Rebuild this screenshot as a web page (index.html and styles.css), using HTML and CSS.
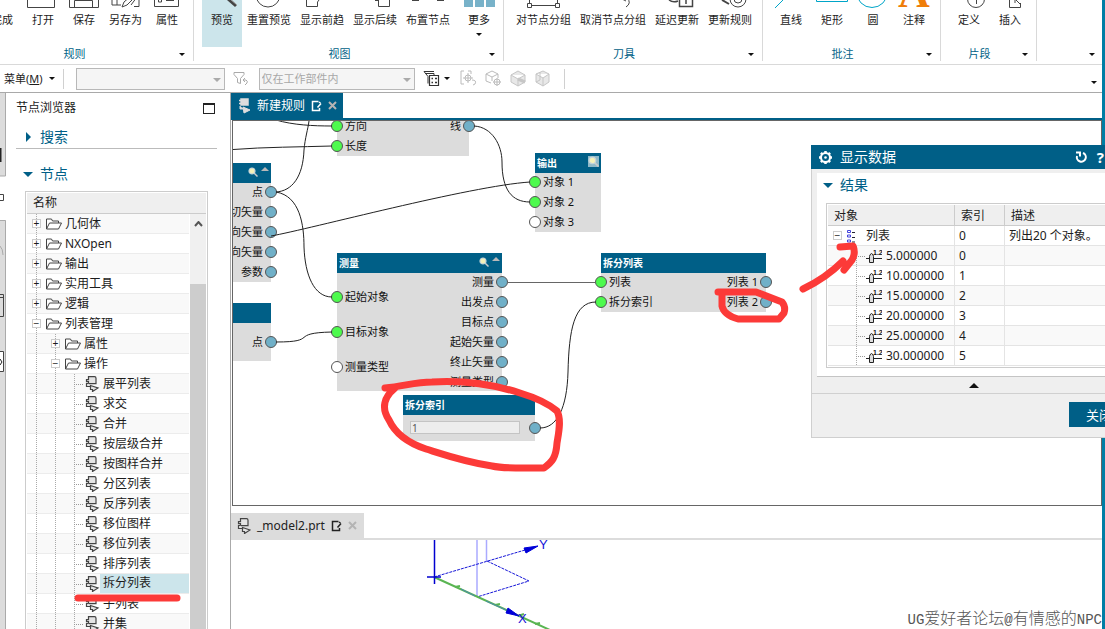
FILE: index.html
```html
<!DOCTYPE html>
<html lang="zh-CN">
<head>
<meta charset="utf-8">
<title>节点浏览器</title>
<link rel="stylesheet" href="styles.css">
</head>
<body>
<svg class="defs" aria-hidden="true">
  <symbol id="folder" viewBox="0 0 16 13"><path d="M.5 11.5V1.5h5l1 2h6v2M.5 11.5l3-6h12l-3 6z" fill="#fff" stroke="#444"/></symbol>
  <symbol id="node" viewBox="0 0 14 16"><path d="M3.500 .7h6q1.500 0 1.500 1.500v5.500h-7.500v-2h-2v-2h2z" fill="#e4e4e4" stroke="#444" stroke-width="1.200"/><path d="M3.500 7.500H1.500v3h4M5.500 9.500l7.500 2.500-5.500 3.500v-2h-2z" fill="#e4e4e4" stroke="#444" stroke-width="1.200"/></symbol>
  <symbol id="node-light" viewBox="0 0 14 16"><path d="M4 1h7v6H4zM2 2.500h2M2 5.500h2" fill="#ddd" stroke="#ddd" stroke-width="1.500"/><path d="M3 8v3h4M6 9l7 3-6 3z" fill="#ddd" stroke="#ddd"/></symbol>
  <symbol id="edit" viewBox="0 0 11 12"><path d="M7.500 1.500h-6v9h7V8M3 1.500h3M10 3.500L6.500 7.500M8 2l1.500 1" fill="none" stroke="currentColor" stroke-width="1.500"/></symbol>
  <symbol id="close" viewBox="0 0 9 9"><path d="M1 1l7 7M8 1L1 8" stroke="#b4b4b4" stroke-width="2"/></symbol>
  <symbol id="lens" viewBox="0 0 10 10"><path d="M6 6l3.500 3.500" stroke="#c9c9c9" stroke-width="1.500"/><circle cx="4" cy="4" r="3" fill="#f4f1b8" stroke="#c4d4da" stroke-width="1.200"/></symbol>
  <symbol id="scalar" viewBox="0 0 16 14"><path d="M0 9.500h4M8 9.500h8" stroke="#222" stroke-width="1.200"/><path d="M3.500 13.500V7.500q0-2 2-3 2 1 2 3v6z" fill="#ddd" stroke="#222"/><text x="7" y="6" class="scalar-text">1.2</text></symbol>
</svg>
<div class="app">
  <div class="main">
    <header class="ribbon">
      <section class="group group--first">
        <div class="tools">
          <button class="tool"><svg viewBox="-20 0 40 10"></svg>完成</button>
          <button class="tool"><svg viewBox="-20 0 40 10"><path d="M-15.500-2V7.500h27V-2"/></svg>打开</button>
          <button class="tool"><svg viewBox="-20 0 40 10"><path d="M-14.500-2V7.500h29V-2M-9.500 7V.5h18V7"/></svg>保存</button>
          <button class="tool"><svg viewBox="-20 0 40 10"><path d="M-14-2V5h9M-9 0v5M-4 7l2-5 7-6M-4 7l5-2 8-8M5 5l6-8M8 6.500h5V-2"/></svg>另存为</button>
          <button class="tool"><svg viewBox="-20 0 40 10"><path d="M-12.500-2V6.500h24V-2M-8.500-1v3h3v-3M-1 .5h8"/></svg>属性</button>
        </div>
        <footer>规则<i class="drop"></i></footer>
      </section>
      <section class="group">
        <div class="tools">
          <button class="tool tool--on"><svg viewBox="-20 0 40 10"><path d="M5-2l9 8" stroke-width="3"/><path d="M7-2l8 7" stroke="#aaa"/></svg>预览</button>
          <button class="tool"><svg viewBox="-20 0 40 10"><circle cx="-1" cy="-5" r="12"/></svg>重置预览</button>
          <button class="tool"><svg viewBox="-20 0 40 10"><path d="M-15.500-2V6.500h11V2l3-4"/></svg>显示前趋</button>
          <button class="tool"><svg viewBox="-20 0 40 10"><path d="M3.500-2V6.500h11V-2M0 .5h3"/></svg>显示后续</button>
          <button class="tool"><svg viewBox="-20 0 40 10"><path d="M-16 .5h7M9 .5h7"/></svg>布置节点</button>
          <button class="tool tool--more"><svg viewBox="-20 0 40 10"><path d="M-15-1h9v8h-9zM-4-1h9v8h-9zM7-1h9v8H7z" fill="#78b2c9" stroke="none"/></svg>更多<i class="drop"></i></button>
        </div>
        <footer>视图<i class="drop"></i></footer>
      </section>
      <section class="group">
        <div class="tools">
          <button class="tool"><svg viewBox="-20 0 40 10"><path d="M-12.500 5.500h24M-14.500-2v5M13.500-2v5"/><path d="M-16.500 3.500h4v4h-4zM11.500 3.500h4v4h-4z"/></svg>对节点分组</button>
          <button class="tool"><svg viewBox="-20 0 40 10"><path d="M14-2q5 5-1 9M9-1l4 2"/></svg>取消节点分组</button>
          <button class="tool"><svg viewBox="-20 0 40 10"><path d="M2.500-2V6.500h13V-2M9 0v4M-8 0q4 3 9 1" stroke-width="1.500"/></svg>延迟更新</button>
          <button class="tool"><svg viewBox="-20 0 40 10"><circle cx="8" cy="-1" r="8"/><circle cx="8" cy="-1" r="4"/><path d="M-8 0l7 4" stroke-width="2"/></svg>更新规则</button>
        </div>
        <footer>刀具<i class="drop"></i></footer>
      </section>
      <section class="group">
        <div class="tools">
          <button class="tool"><svg viewBox="-20 0 40 10" class="cyan"><path d="M-16 8L-6-2"/></svg>直线</button>
          <button class="tool"><svg viewBox="-20 0 40 10" class="cyan"><path d="M-15.500-2V1.500h31V-2"/></svg>矩形</button>
          <button class="tool"><svg viewBox="-20 0 40 10" class="cyan"><circle cx="-1" cy="-8" r="15.500"/></svg>圆</button>
          <button class="tool"><svg viewBox="-20 0 40 10"><text x="0" y="7" class="note-text">A</text></svg>注释</button>
        </div>
        <footer>批注<i class="drop"></i></footer>
      </section>
      <section class="group">
        <div class="tools">
          <button class="tool"><svg viewBox="-20 0 40 10"><circle cx="7" cy="-1" r="8.500"/><path d="M7.500-2v6"/></svg>定义</button>
          <button class="tool"><svg viewBox="-20 0 40 10"><path d="M3-.5H-.5V7.500h11V3M10 4L5-1M5 3V-1h4"/></svg>插入</button>
        </div>
        <footer>片段<i class="drop"></i></footer>
      </section>
      <section class="group group--rest"><footer><i class="drop"></i></footer></section>
    </header>

    <nav class="toolbar">
      <button class="menu"><span>菜单(<u>M</u>)</span><i class="drop"></i></button>
      <span class="sep"></span>
      <span class="combo"><select aria-label="类型过滤器" disabled><option></option></select></span>
      <svg class="tb-icon" width="16" height="16" fill="none" stroke="#aaa"><path d="M1 1.500h10v2l-3.500 4v5l-3-1v-4L1 3.500zM10 9h3q2 1 1 3l-2 2M10 9l2-2M10 9l2 2"/></svg>
      <span class="combo combo--scope"><select aria-label="选择范围" disabled><option>仅在工作部件内</option></select></span>
      <button class="icon-btn" aria-label="过滤"><svg width="17" height="17" fill="none" stroke="#333"><path d="M1 1.500h10M1 1.500l4 5v7M2 3.500h9v2"/><path d="M6.500 5.500h9v10h-9z" fill="#fff" stroke-width="1.200"/><path d="M8.500 8.500h1.500M12 8.500h2M8.500 12.500h1.500M12 12.500h2" stroke-width="1.500"/></svg><i class="drop"></i></button>
      <svg class="tb-icon" width="17" height="17" fill="none" stroke="#bbb"><path d="M4 1H1v13h3M8 1h3v3M8 3v10M3 8h10M12 10q5 0 3 4l-2 1"/><circle cx="8" cy="8" r="3"/></svg>
      <svg class="tb-icon" width="17" height="17" fill="none" stroke="#bbb"><path d="M1 4l6-3 6 3v4M1 4v7l5 2M1 4l6 3 6-3M7 7v4M12 8v8M8 12h8"/><circle cx="12" cy="12" r="3"/></svg>
      <svg class="tb-icon" width="17" height="17" fill="#e8e8e8" stroke="#c6c6c6"><path d="M1 5l7-4 7 4v7l-7 4-7-4zM1 5l7 4 7-4M8 9v7"/><path d="M8 9l7 3" stroke-width="3"/></svg>
      <svg class="tb-icon" width="17" height="17" fill="#e8e8e8" stroke="#c6c6c6"><path d="M1 4l7-3 6 3v8l-6 4-7-4zM1 4l7 4 6-4M8 8v8M5 2v8M5 10l-4 2"/></svg>
      <span class="sep"></span>
      <i class="drop drop--end"></i>
    </nav>

    <div class="work">
      <aside class="rail-bar">
        <svg width="6" height="536"><path d="M0 0h6v83H0zM0 127h6v409H0z" fill="#dcdcdc"/><path d="M5.500 0v83H0M0 127.500h5.500V536" fill="none" stroke="#aaa"/><path d="M0 55v14" stroke="#222" stroke-width="3"/><path d="M0 101.500h3.500v6H0M0 201.500h3.500v22H0M0 204.500h3M0 258.500h3.500v20H0" fill="none" stroke="#444"/><path d="M0 259h3v19H0z" fill="#fff"/><path d="M0 153q3 3 3 9" fill="none" stroke="#aaa"/><path d="M0 266l2 3-2 3" fill="none" stroke="#222"/></svg>
      </aside>

      <aside class="browser">
        <div class="browser-head"><span>节点浏览器</span><button class="maximize" aria-label="最大化"></button></div>
        <button class="fold fold--closed"><i></i>搜索</button>
        <button class="fold"><i></i>节点</button>
        <div class="tree-box">
          <div class="tree-title">名称</div>
          <div class="tree-scroll">
            <ul class="tree">
              <li><b class="rail"><i>+</i></b><svg><use href="#folder"/></svg><span>几何体</span></li>
              <li><b class="rail"><i>+</i></b><svg><use href="#folder"/></svg><span>NXOpen</span></li>
              <li><b class="rail"><i>+</i></b><svg><use href="#folder"/></svg><span>输出</span></li>
              <li><b class="rail"><i>+</i></b><svg><use href="#folder"/></svg><span>实用工具</span></li>
              <li><b class="rail"><i>+</i></b><svg><use href="#folder"/></svg><span>逻辑</span></li>
              <li><b class="rail"><i>−</i></b><svg><use href="#folder"/></svg><span>列表管理</span></li>
              <li><b class="rail"></b><b class="rail"><i>+</i></b><svg><use href="#folder"/></svg><span>属性</span></li>
              <li><b class="rail"></b><b class="rail"><i>−</i></b><svg><use href="#folder"/></svg><span>操作</span></li>
              <li><b class="rail"></b><b class="rail"></b><b class="rail leaf"></b><svg><use href="#node"/></svg><span>展平列表</span></li>
              <li><b class="rail"></b><b class="rail"></b><b class="rail leaf"></b><svg><use href="#node"/></svg><span>求交</span></li>
              <li><b class="rail"></b><b class="rail"></b><b class="rail leaf"></b><svg><use href="#node"/></svg><span>合并</span></li>
              <li><b class="rail"></b><b class="rail"></b><b class="rail leaf"></b><svg><use href="#node"/></svg><span>按层级合并</span></li>
              <li><b class="rail"></b><b class="rail"></b><b class="rail leaf"></b><svg><use href="#node"/></svg><span>按图样合并</span></li>
              <li><b class="rail"></b><b class="rail"></b><b class="rail leaf"></b><svg><use href="#node"/></svg><span>分区列表</span></li>
              <li><b class="rail"></b><b class="rail"></b><b class="rail leaf"></b><svg><use href="#node"/></svg><span>反序列表</span></li>
              <li><b class="rail"></b><b class="rail"></b><b class="rail leaf"></b><svg><use href="#node"/></svg><span>移位图样</span></li>
              <li><b class="rail"></b><b class="rail"></b><b class="rail leaf"></b><svg><use href="#node"/></svg><span>移位列表</span></li>
              <li><b class="rail"></b><b class="rail"></b><b class="rail leaf"></b><svg><use href="#node"/></svg><span>排序列表</span></li>
              <li class="selected"><b class="rail"></b><b class="rail"></b><b class="rail leaf"></b><svg><use href="#node"/></svg><span>拆分列表</span></li>
              <li><b class="rail"></b><b class="rail"></b><b class="rail leaf"></b><svg><use href="#node"/></svg><span>子列表</span></li>
              <li><b class="rail"></b><b class="rail"></b><b class="rail leaf"></b><svg><use href="#node"/></svg><span>并集</span></li>
            </ul>
            <div class="scrollbar"><svg width="9" height="6"><path d="M1 5l3.500-4L8 5" fill="none" stroke="#555" stroke-width="2"/></svg><span></span></div>
          </div>
        </div>
      </aside>

      <main class="editor">
        <div class="tabs tabs--active">
          <div class="tab"><svg width="14" height="16"><use href="#node-light"/></svg><span>新建规则</span><svg width="11" height="12"><use href="#edit"/></svg><button aria-label="关闭新建规则"><svg width="9" height="9"><use href="#close"/></svg></button></div>
        </div>
        <div class="canvas">
          <section class="graph-node n-line">
            <div class="ports"><ul><li class="on">方向</li><li class="on">长度</li></ul><ul class="out"><li>线</li></ul></div>
          </section>
          <section class="graph-node n-vector">
            <h3><span></span><svg><use href="#lens"/></svg><i class="up"></i></h3>
            <div class="ports"><ul class="out"><li>点</li><li>切矢量</li><li>向矢量</li><li>向矢量</li><li>参数</li></ul></div>
          </section>
          <section class="graph-node n-point">
            <h3></h3>
            <div class="ports"><ul class="out"><li>点</li></ul></div>
          </section>
          <section class="graph-node n-measure">
            <h3><span>测量</span><svg><use href="#lens"/></svg><i class="up"></i></h3>
            <div class="ports"><ul class="loose"><li class="on">起始对象</li><li class="on">目标对象</li><li>测量类型</li></ul><ul class="out"><li>测量</li><li>出发点</li><li>目标点</li><li>起始矢量</li><li>终止矢量</li><li>测量类型</li></ul></div>
          </section>
          <section class="graph-node n-output">
            <h3><span>输出</span><svg class="boxed"><use href="#lens"/></svg></h3>
            <div class="ports"><ul><li class="on">对象 1</li><li class="on">对象 2</li><li>对象 3</li></ul></div>
          </section>
          <section class="graph-node n-split">
            <h3><span>拆分列表</span></h3>
            <div class="ports"><ul><li class="on">列表</li><li class="on">拆分索引</li></ul><ul class="out"><li>列表 1</li><li>列表 2</li></ul></div>
          </section>
          <section class="graph-node n-index">
            <h3><span>拆分索引</span></h3>
            <div class="ports"><input aria-label="拆分索引" value="1"><ul class="out"><li></li></ul></div>
          </section>
          <svg class="wires" width="872" height="386" viewBox="233 121 872 386">
            <path d="M276 120C293 125 313 126 332 126M233 149.500C265 147 300 147 332 146M276 192C292 191 303 177 304 150C305 138 308 129 309 121M276 192C300 196 304 225 304 247C305 275 314 297 332 297M271 236C310 229 470 186 530 182M474 126C492 127 502 145 502 162C502 190 512 202 530 202M276 342C320 342 288 333 332 332M540 428C557 428 567 408 568 372C569 330 574 302 596 302"/>
            <path d="M507 282.500H596" stroke="#666"/>
          </svg>
        </div>
        <div class="tabs tabs--idle">
          <div class="tab"><svg width="14" height="16"><use href="#node"/></svg><span>_model2.prt</span><svg width="11" height="12"><use href="#edit"/></svg><button aria-label="关闭 _model2.prt"><svg width="9" height="9"><use href="#close"/></svg></button></div>
        </div>
        <div class="viewport">
          <svg width="330" height="89" viewBox="231 540 330 89">
            <g fill="none" stroke="#aaf" stroke-width="1.500"><path d="M477 540v57M486.500 540v21"/></g>
            <g fill="none" stroke="#1515d8" stroke-dasharray="3 1"><path d="M434 577L525 550M487 561L529 581L477 597"/></g>
            <path d="M434 577L550 630" stroke="#5ab552" stroke-width="2"/>
            <path d="M455 587l5-1M495 605l5-1M518 616l6-2M535 624l5-1" stroke="#5ab552" stroke-width="2"/>
            <path d="M461 589l14 7M486 601l20 9" stroke="#4b87b5"/>
            <path d="M434.500 540v44M427 577h14" stroke="#0000d0" stroke-width="1.500"/>
            <path d="M524 548l14-2-12 7zM508 608l11 8-13-3z" fill="#0000d8" stroke="#0000d8"/>
            <text x="539" y="549">Y</text><text x="518" y="623">X</text>
          </svg>
          <p class="credit"><span>UG</span>爱好者论坛<span>@</span>有情感的<span>NPC</span></p>
        </div>
      </main>
    </div>
  </div>
  <div class="edge"></div>

  <section class="dialog">
    <header><svg width="15" height="15"><path d="M7.500 1v13M1 7.500h13M2.900 2.900l9.200 9.200M12.100 2.900L2.900 12.100" stroke="#fff" stroke-width="2.500"/><circle cx="7.500" cy="7.500" r="4.500" fill="#005f87" stroke="#fff" stroke-width="2"/><circle cx="7.500" cy="7.500" r="1.300" fill="#fff"/></svg><h2>显示数据</h2><button aria-label="重置"><svg width="13" height="13" fill="none" stroke="#fff" stroke-width="2"><path d="M8 2a4.500 4.500 0 1 1-6 3M1 1.500h4v4"/></svg></button><button>?</button></header>
    <div class="result">
      <button class="fold"><i></i>结果</button>
      <table>
        <thead><tr><th class="c-object">对象</th><th class="c-index">索引</th><th>描述</th></tr></thead>
        <tbody>
          <tr><td><div class="cell"><b class="rail"><i>−</i></b><svg width="9" height="14" fill="none" stroke="#44d"><path d="M.5 1.500h3v2h-3zM.5 6h3v2h-3zM.5 11h3v2h-3z"/><path d="M5 3.500h3M5 8.500h3M5 13h3" stroke="#223"/></svg><span>列表</span></div></td><td>0</td><td>列出20 个对象。</td></tr>
          <tr><td><div class="cell child"><b class="rail leaf"></b><svg width="16" height="14"><use href="#scalar"/></svg><span>5.000000</span></div></td><td>0</td><td></td></tr>
          <tr><td><div class="cell child"><b class="rail leaf"></b><svg width="16" height="14"><use href="#scalar"/></svg><span>10.000000</span></div></td><td>1</td><td></td></tr>
          <tr><td><div class="cell child"><b class="rail leaf"></b><svg width="16" height="14"><use href="#scalar"/></svg><span>15.000000</span></div></td><td>2</td><td></td></tr>
          <tr><td><div class="cell child"><b class="rail leaf"></b><svg width="16" height="14"><use href="#scalar"/></svg><span>20.000000</span></div></td><td>3</td><td></td></tr>
          <tr><td><div class="cell child"><b class="rail leaf"></b><svg width="16" height="14"><use href="#scalar"/></svg><span>25.000000</span></div></td><td>4</td><td></td></tr>
          <tr><td><div class="cell child"><b class="rail leaf"></b><svg width="16" height="14"><use href="#scalar"/></svg><span>30.000000</span></div></td><td>5</td><td></td></tr>
        </tbody>
      </table>
    </div>
    <button class="collapse" aria-label="收起"><i></i></button>
    <footer><button>关闭</button></footer>
  </section>

  <svg class="marks" width="1105" height="629" fill="none" stroke="#fc3a38" stroke-linecap="round" stroke-linejoin="round">
    <path d="M385 388C405 386 415 382 432 382C465 380 495 385 520 393C540 399 550 405 557 411C562 420 558 436 557 443C556 458 552 462 544 468C520 468 505 469 492 466C465 462 445 455 426 449C408 443 395 433 389 420C381 408 384 397 395 388" stroke-width="7"/>
    <path d="M718 292H756L782 302Q786 307 784 313L779 319H738Q724 315 722 306V293" stroke-width="7"/>
    <path d="M803 289Q826 278 843 261M840 247L853 246Q856 253 852 260L844 270" stroke-width="7"/>
    <path d="M78 598H177" stroke-width="7"/>
  </svg>
</div>
</body>
</html>
```
FILE: styles.css
```css
* { box-sizing: border-box; }
body { margin: 0; background: #fff; color: #1c1c1c; font: 12px/20px "Noto Sans", "Noto Sans CJK SC", sans-serif; }
button { border: 0; padding: 0; background: none; color: inherit; font: inherit; }
ul, p, h2, h3 { margin: 0; padding: 0; list-style: none; font-weight: 400; }
svg { display: block; flex: none; }
.defs { position: absolute; width: 0; height: 0; }
.app { position: relative; display: flex; height: 100vh; overflow: hidden; }
.main { flex: 1; min-width: 0; display: flex; flex-direction: column; }
.edge { flex: 0 0 3px; background: #007ea5; }
.drop { display: block; flex: none; border: 3px solid transparent; border-top-color: #111; border-bottom: 0; }

/* ribbon */
.ribbon { display: flex; flex: none; height: 65px; padding-bottom: 3px; border-bottom: 1px solid #d9d9d9; font-size: 11px; }
.group { flex: none; display: flex; flex-direction: column; justify-content: space-between; padding: 0 6px 0 8px; border-right: 1px solid #d9d9d9; }
.group--first { margin-left: -26px; }
.group--rest { flex: 1; border: 0; justify-content: flex-end; padding-right: 5px; }
.tools { display: flex; gap: 1px; }
.tool { display: flex; flex-direction: column; align-items: center; min-width: 40px; height: 47px; padding: 0 4px; line-height: 18px; white-space: nowrap; }
.tool svg { width: 40px; height: 10px; margin: 0 -4px 1px; fill: none; stroke: #444; }
.tool svg.cyan { stroke: #00a5c8; }
.tool--on { background: #cce5eb; }
.tool--more { margin: 0 -2px 0 4px; }
.tool--more .drop { margin-top: 4px; }
.note-text { font: bold 44px "Liberation Serif", serif; fill: #ef7d0a; stroke: none; text-anchor: middle; }
.group footer { position: relative; display: flex; align-items: center; justify-content: center; height: 14px; padding-right: 20px; line-height: 14px; color: #005f87; }
.group footer .drop { position: absolute; right: 2px; }

/* selection toolbar */
.toolbar { display: flex; flex: none; align-items: center; height: 28px; padding: 0 5px 0 4px; border-bottom: 1px solid #a9a9a9; font-size: 11px; }
.menu { display: flex; align-items: center; gap: 6px; white-space: nowrap; }
.sep { width: 1px; height: 20px; margin: 0 12px 0 8px; background: #d0d0d0; }
.combo { position: relative; flex: 0 0 149px; height: 22px; }
.combo--scope { flex-basis: 156px; }
.combo::after { content: ""; position: absolute; right: 4px; top: 10px; border: 4px solid transparent; border-top-color: #aaa; border-bottom: 0; }
.combo select { display: block; width: 100%; height: 100%; padding: 0 2px; border: 1px solid #b8b8b8; border-radius: 0; background: #f5f5f5; color: #a8a8a8; font: inherit; appearance: none; opacity: 1; }
.tb-icon { margin: 0 4px; }
.combo + .tb-icon { margin: 0 10px 0 8px; }
.icon-btn { display: flex; align-items: center; gap: 4px; margin: 0 6px 0 8px; }
.drop--end { margin: 8px 0 0 auto; }

/* workspace */
.work { display: flex; flex: 1; min-height: 0; }
.rail-bar { flex: 0 0 6px; overflow: hidden; }
.browser { flex: 0 0 225px; display: flex; flex-direction: column; padding: 5px 13px 0 10px; border-right: 1px solid #aaa; overflow: hidden; }
.browser-head { display: flex; justify-content: space-between; align-items: center; height: 20px; flex: none; padding-right: 2px; }
.maximize { width: 12px; height: 11px; border: 1px solid #222; border-top-width: 2px; }
.fold { display: flex; align-items: center; height: 24px; flex: none; color: #005f87; font-size: 14px; line-height: 24px; }
.fold i { margin: 0 7px 0 7px; border: 5px solid transparent; border-top-color: #005f87; border-bottom: 0; }
.fold--closed { margin-top: 8px; height: 23px; border-bottom: 1px solid #bbb; }
.fold--closed i { margin: 0 9px 0 10px; border: 5px solid transparent; border-left-color: #005f87; border-right: 0; }
.browser .fold + .fold { margin-top: 13px; }
.tree-box { flex: 1; min-height: 0; display: flex; flex-direction: column; margin: 5px 9px 0; padding: 1px 1px 0; border: 1px solid #ccc; border-bottom: 0; }
.tree-title { flex: none; height: 21px; padding-left: 6px; background: #efefef; border-bottom: 1px solid #ccc; }
.tree-scroll { flex: 1; min-height: 0; display: flex; gap: 1px; }
.tree { flex: 1; overflow: hidden; }
.tree li { display: flex; align-items: center; height: 20px; border-bottom: 1px solid #ececec; line-height: 18px; }
.tree li:nth-child(odd) { background: #f9f9f9; }
.tree li svg { width: 16px; height: 16px; }
.tree li span { flex: 1; padding-left: 3px; white-space: nowrap; }
.tree .selected span { background: #cce5eb; height: 19px; }
.rail { position: relative; flex: 0 0 19px; height: 20px; background: repeating-linear-gradient(#aaa 0 1px, transparent 1px 2px) 9px 0 / 1px 100% no-repeat; }
.rail i { position: absolute; left: 5px; top: 5px; width: 9px; height: 9px; border: 1px solid #ccc; background: #fff; font: 10px/7px "Liberation Sans", sans-serif; text-align: center; }
.rail.leaf::after { content: ""; position: absolute; left: 9px; top: 10px; width: 9px; border-top: 1px dotted #999; }
.scrollbar { flex: 0 0 16px; display: flex; flex-direction: column; align-items: center; padding-top: 7px; background: #f0f0f0; }
.scrollbar span { flex: 1; width: 100%; margin-top: 57px; background: #cdcdcd; }

.editor { flex: 1; min-width: 0; display: flex; flex-direction: column; }
.tabs { display: flex; flex: none; height: 27px; border-bottom: 2px solid #005f87; }
.tab { display: flex; align-items: center; gap: 6px; height: 25px; padding: 0 6px; background: #005f87; color: #fff; white-space: nowrap; }
.tabs--idle { border-color: #dcdcdc; margin-top: 7px; }
.tabs--idle .tab { padding-right: 7px; background: #dcdcdc; color: #222; }
.canvas { position: relative; flex: 0 0 386px; margin-left: 1px; border: 1px solid #666; overflow: hidden; font-size: 11px; }
.wires { position: absolute; left: 0; top: 0; fill: none; stroke: #222; stroke-width: 1; pointer-events: none; }
.graph-node { position: absolute; background: #dcdcdc; color: #111; }
.graph-node h3 { display: flex; height: 20px; padding: 0 2px 0 2px; background: #005f87; color: #fff; font-size: 10px; font-weight: 700; }
.graph-node h3 span { flex: 1; }
.graph-node h3 svg { width: 10px; height: 10px; margin: 4px 3px 0 0; }
.graph-node h3 svg.boxed { width: 11px; height: 11px; margin: 3px 0 0; background: #8fb9c8; }
.up { height: 4px; margin-top: 4px; border: 4px solid transparent; border-bottom-color: #b9b9b9; border-top: 0; }
.ports { display: flex; justify-content: space-between; margin-top: -1px; }
.ports li { display: flex; align-items: center; gap: 2px; height: 20px; white-space: nowrap; line-height: 18px; }
.ports li::before { content: ""; width: 10px; height: 10px; margin-left: -6px; border: 1px solid #555; border-radius: 50%; background: #fff; }
.ports li.on::before { background: #4dfa4d; }
.ports .out { margin-left: auto; }
.ports .out li { flex-direction: row-reverse; }
.ports .out li::before { margin: 0 -6px 0 0; background: #70b0c8; }
.ports .loose { padding-top: 7px; }
.ports .loose li { height: 35px; }
.ports input { width: 110px; height: 13px; margin: 7px 0 7px 7px; padding: 0 1px; border: 1px solid #c4c4c4; background: #ededed; color: #555; font: 10px/11px "Noto Sans", sans-serif; }
.n-index .out { padding-top: 4px; }
.n-line { left: 104px; top: -4px; width: 132px; }
.n-vector { left: -28px; top: 42px; width: 66px; }
.n-point { left: -28px; top: 182px; width: 66px; padding-bottom: 9px; }
.n-point .ports { padding-top: 10px; }
.n-measure { left: 104px; top: 132px; width: 165px; height: 138px; }
.n-output { left: 302px; top: 32px; width: 66px; }
.n-split { left: 368px; top: 132px; width: 165px; }
.n-index { left: 170px; top: 274px; width: 132px; }

.viewport { position: relative; flex: 1; min-height: 0; overflow: hidden; }
.viewport svg text { font: 13px "Liberation Sans", sans-serif; fill: #1515d8; }
.credit { position: absolute; right: 0; bottom: 0; font: 300 16px/24px "Noto Sans CJK SC", sans-serif; color: #555; white-space: nowrap; }
.credit span { font: 14px "Liberation Mono", monospace; }

/* data dialog */
.dialog { position: absolute; left: 811px; top: 145px; width: 330px; border: 1px solid #cfcfcf; border-top: 0; background: #efefef; }
.dialog header { display: flex; align-items: center; height: 24px; margin-left: -1px; padding: 0 36px 0 7px; background: #005f87; color: #fff; font-size: 14px; }
.dialog h2 { flex: 1; padding-left: 7px; font-size: 14px; }
.dialog header button { margin-left: 9px; font-weight: 700; font-size: 15px; }
.result { margin: 4px 0 0 5px; padding-bottom: 8px; background: #fff; border-bottom: 1px solid #c4c4c4; }
.result .fold i { margin-left: 6px; }
.dialog table { width: 100%; margin: 6px 0 0 9px; border: 1px solid #ccc; border-collapse: separate; border-spacing: 0; padding: 1px; table-layout: fixed; }
.dialog th, .dialog td { height: 20px; padding: 0 4px; border-right: 1px solid #e4e4e4; border-bottom: 1px solid #e4e4e4; text-align: left; font-weight: 400; line-height: 19px; white-space: nowrap; }
.dialog th { height: 21px; padding: 0 6px; background: #efefef; border-color: #ccc; }
.dialog .c-object { width: 127px; }
.dialog .c-index { width: 50px; }
.dialog tbody tr:nth-child(even) { background: #f9f9f9; }
.dialog td:first-child { padding: 0; }
.cell { display: flex; align-items: center; height: 19px; }
.cell > .rail { background: none; }
.cell > span { padding-left: 10px; }
.cell.child > .rail { margin-left: 19px; background: repeating-linear-gradient(#aaa 0 1px, transparent 1px 2px) 9px 0 / 1px 100% no-repeat; }
.cell.child > span { padding-left: 4px; }
.scalar-text { font: bold 7px "Liberation Sans", sans-serif; fill: #111; }
.collapse { display: flex; justify-content: center; align-items: center; width: 100%; height: 17px; padding-right: 4px; border-bottom: 1px solid #d0d0d0; }
.collapse i { border: 5px solid transparent; border-bottom-color: #111; border-top: 0; }
.dialog footer { display: flex; justify-content: flex-end; padding: 8px 11px 10px; }
.dialog footer button { width: 60px; height: 25px; background: #005f87; color: #fff; font-size: 13px; }
.marks { position: absolute; left: 0; top: 0; pointer-events: none; }
```
